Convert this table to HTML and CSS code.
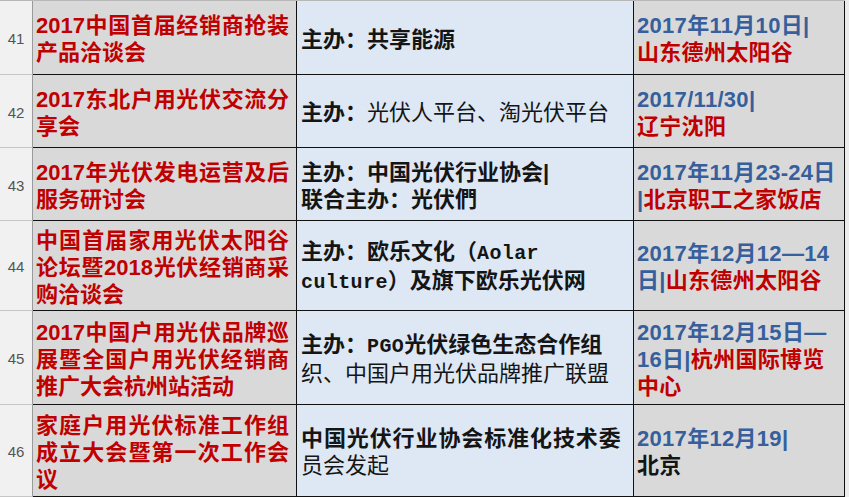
FILE: index.html
```html
<!DOCTYPE html>
<html lang="zh">
<head>
<meta charset="utf-8">
<link rel="stylesheet" href="styles.css">
</head>
<body>
<div class="sheet">
  <div class="cell num r1">41</div>
  <div class="cell name r1"><div class="line j">2017中国首届经销商抢装</div><div class="line">产品洽谈会</div></div>
  <div class="cell org r1"><div class="line b">主办：共享能源</div></div>
  <div class="cell date r1"><div class="line blue">2017年11月10日|</div><div class="line red">山东德州太阳谷</div></div>

  <div class="cell num r2">42</div>
  <div class="cell name r2"><div class="line j">2017东北户用光伏交流分</div><div class="line">享会</div></div>
  <div class="cell org r2"><div class="line"><span class="b">主办：</span>光伏人平台、淘光伏平台</div></div>
  <div class="cell date r2"><div class="line blue">2017/11/30|</div><div class="line red">辽宁沈阳</div></div>

  <div class="cell num r3">43</div>
  <div class="cell name r3"><div class="line j">2017年光伏发电运营及后</div><div class="line">服务研讨会</div></div>
  <div class="cell org r3"><div class="line b">主办：中国光伏行业协会|</div><div class="line b">联合主办：光伏們</div></div>
  <div class="cell date r3"><div class="line blue">2017年11月23-24日</div><div class="line"><span class="blue">|</span><span class="red">北京职工之家饭店</span></div></div>

  <div class="cell num r4">44</div>
  <div class="cell name r4"><div class="line j">中国首届家用光伏太阳谷</div><div class="line j">论坛暨2018光伏经销商采</div><div class="line">购洽谈会</div></div>
  <div class="cell org r4"><div class="line b">主办：欧乐文化（<span class="mono">Aolar</span></div><div class="line b"><span class="mono">culture</span>）及旗下欧乐光伏网</div></div>
  <div class="cell date r4"><div class="line blue">2017年12月12—14</div><div class="line"><span class="blue">日|</span><span class="red">山东德州太阳谷</span></div></div>

  <div class="cell num r5">45</div>
  <div class="cell name r5"><div class="line j">2017中国户用光伏品牌巡</div><div class="line j">展暨全国户用光伏经销商</div><div class="line">推广大会杭州站活动</div></div>
  <div class="cell org r5"><div class="line b">主办：<span class="mono">PGO</span>光伏绿色生态合作组</div><div class="line">织、中国户用光伏品牌推广联盟</div></div>
  <div class="cell date r5"><div class="line blue">2017年12月15日—</div><div class="line"><span class="blue">16日|</span><span class="red">杭州国际博览</span></div><div class="line red">中心</div></div>

  <div class="cell num r6">46</div>
  <div class="cell name r6"><div class="line j">家庭户用光伏标准工作组</div><div class="line j">成立大会暨第一次工作会</div><div class="line">议</div></div>
  <div class="cell org r6"><div class="line b wide">中国光伏行业协会标准化技术委</div><div class="line">员会发起</div></div>
  <div class="cell date r6"><div class="line blue">2017年12月19|</div><div class="line dark">北京</div></div>
</div>
</body>
</html>
```

FILE: styles.css
```css
html, body {
  margin: 0;
  padding: 0;
  background: #ececec;
}

.sheet {
  display: grid;
  grid-template-columns: 33px 264px 337px 211px;
  grid-template-rows: 74px 73px 73px 90px 94px 92px;
  width: 845px;
  border-top: 1px solid #b8b8b8;
  font-family: "Liberation Sans", "Noto Sans CJK SC", sans-serif;
  font-size: 22px;
  line-height: 27px;
}

.cell {
  box-sizing: border-box;
  display: flex;
  flex-direction: column;
  justify-content: center;
  border-bottom: 1px solid #111;
  border-right: 1px solid #111;
  white-space: nowrap;
  overflow: hidden;
  padding-top: 3px;
}

.num {
  background: #f1f1f1;
  border-bottom: 1px solid #c6c6c6;
  border-right: 1px solid #9a9a9a;
  align-items: center;
  font-size: 15px;
  line-height: 18px;
  color: #555;
  font-family: "Liberation Sans", sans-serif;
}

.name {
  background: #d9d9d9;
  color: #c00000;
  font-weight: bold;
  padding-left: 3px;
  padding-right: 7px;
}

.org {
  background: #dde8f4;
  color: #151515;
  padding-left: 4px;
  padding-right: 4px;
}

.date {
  background: #d9d9d9;
  font-weight: bold;
  padding-left: 3px;
  padding-right: 3px;
  letter-spacing: 0.3px;
}

.line.j {
  text-align: justify;
  text-align-last: justify;
}

.b { font-weight: bold; }

.wide { letter-spacing: 0.9px; }

.mono {
  font-family: "Liberation Mono", monospace;
  font-size: 20px;
  letter-spacing: 0.4px;
}

.blue { color: #365f9c; }
.red { color: #c00000; }
.dark { color: #151515; }
```
